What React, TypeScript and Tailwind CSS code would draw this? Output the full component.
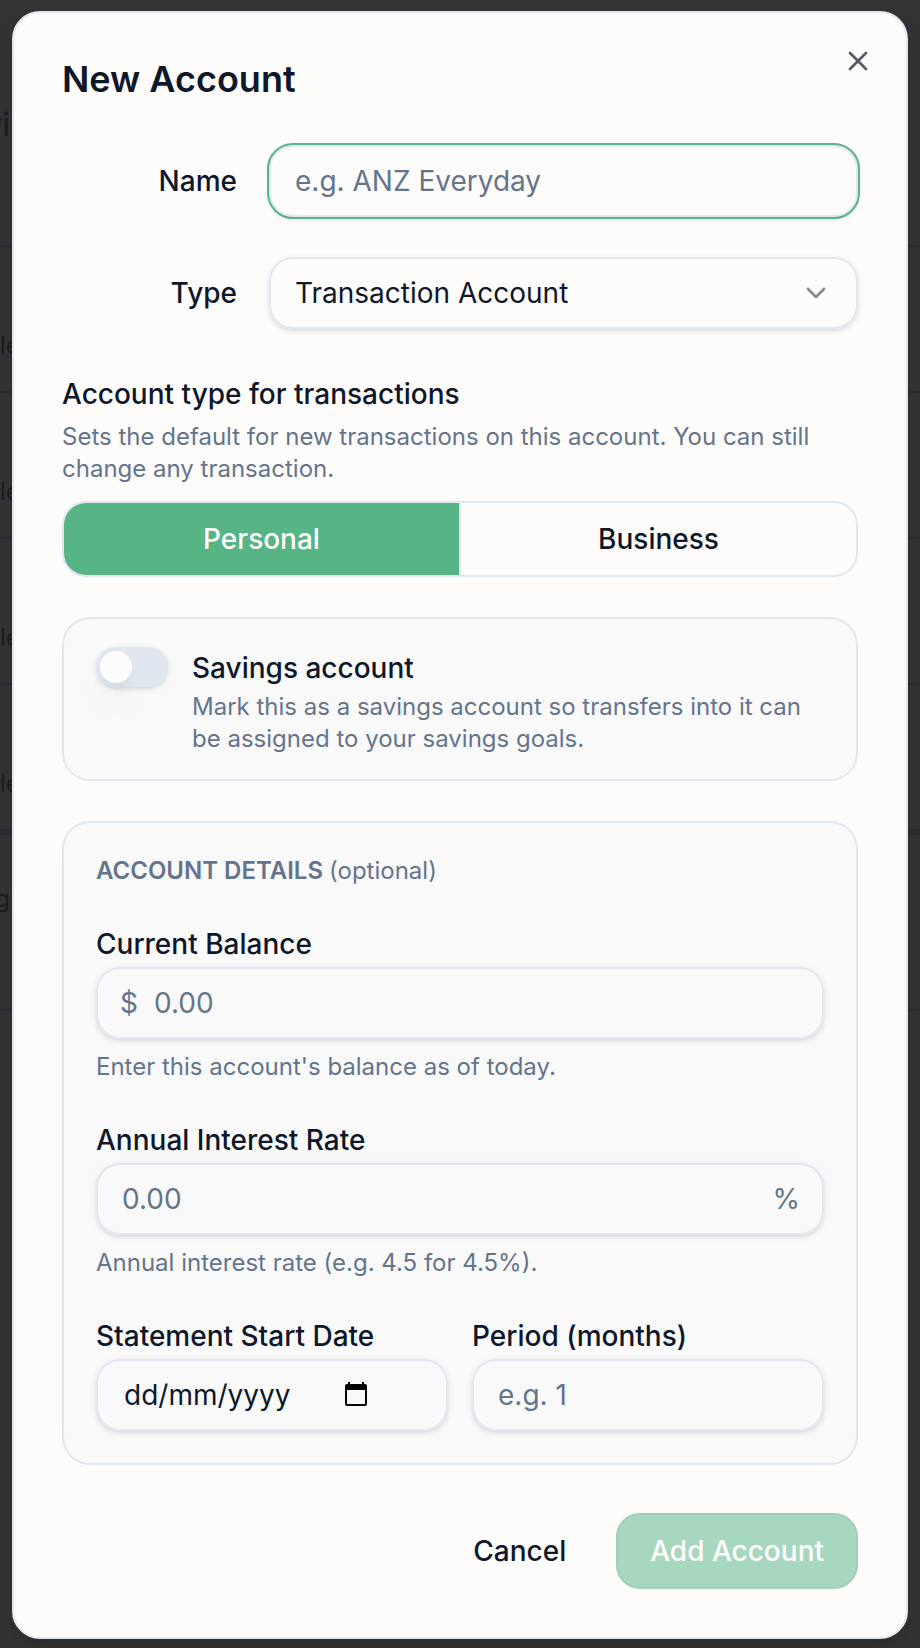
import { useState } from 'react';
import { ChevronDown, X } from 'lucide-react';

const fieldClass =
  'w-full h-18 rounded-3xl border-2 border-[#e1e7f1] bg-transparent px-6 text-[28px] text-[#0f172a] placeholder:text-[#64748b] shadow-[0_2px_6px_rgba(0,0,0,0.1),0_2px_4px_-2px_rgba(0,0,0,0.1)] focus:outline-none';

const labelClass = 'text-[28px] font-medium text-[#0f172a]';
const stackedLabelClass = 'block pt-0.5 text-[28px] leading-[46px] font-medium text-[#0f172a]';
const hintClass = 'text-2xl leading-8 text-[#64748b]';

const CalendarIcon = () => (
  <svg className="w-6 h-[26px]" viewBox="0 0 24 26" aria-hidden="true">
    <path
      fill="#000"
      fillRule="evenodd"
      d="M4 0h2v2h12V0h2v2h1a2 2 0 0 1 2 2v18a2 2 0 0 1-2 2H3a2 2 0 0 1-2-2V4a2 2 0 0 1 2-2h1zM3 8v14h18V8z"
    />
  </svg>
);

// The page that sits under the dimmed overlay
const PageBehind = () => (
  <div aria-hidden="true" className="absolute inset-0 overflow-hidden text-2xl text-[#1b1d22]">
    <div className="h-[247px] border-b-2 border-[#2d2d2d] pt-[105px]">
      <div className="flex w-[10px] justify-end overflow-hidden text-[32px] leading-10">vi</div>
    </div>
    {[0, 1, 2, 3].map((row) => (
      <div key={row} className="h-[146px] border-b-2 border-[#2d2d2d] pt-[83px] leading-8">
        le
      </div>
    ))}
    <div className="h-[180px] border-b-2 border-t-4 border-[#2d2d2d] pt-12">
      <div className="flex w-[10px] justify-end overflow-hidden leading-8">g</div>
    </div>
  </div>
);

const App = () => {
  const [name, setName] = useState('');
  const [type, setType] = useState('transaction');
  const [usage, setUsage] = useState<'personal' | 'business'>('personal');
  const [isSavings, setIsSavings] = useState(false);
  const [balance, setBalance] = useState('');
  const [rate, setRate] = useState('');
  const [startDate, setStartDate] = useState('');
  const [period, setPeriod] = useState('');

  const usageClass = (value: 'personal' | 'business') =>
    usage === value ? 'bg-[#56b485] text-white' : 'text-[#0f172a]';

  return (
    <div className="relative min-h-screen bg-[#333333] px-3 pt-[11px] pb-[9px] font-['Inter',sans-serif]">
      <PageBehind />

      <div
        role="dialog"
        aria-labelledby="dialogTitle"
        className="relative rounded-[28px] border-2 border-[#e1e7f1] bg-[#fdfcfa] p-12 shadow-[0_20px_30px_-6px_rgba(0,0,0,0.1),0_8px_12px_-8px_rgba(0,0,0,0.1)]"
      >
        <button type="button" aria-label="Close" className="absolute top-8 right-8 text-[#0f172a] opacity-70">
          <X className="w-8 h-8" />
        </button>

        <h2 id="dialogTitle" className="text-4xl leading-9 font-semibold text-[#0f172a]">
          New Account
        </h2>

        <form className="mt-12" onSubmit={(e) => e.preventDefault()}>
          <div className="space-y-10">
            <div className="grid grid-cols-4 items-center gap-8">
              <label htmlFor="name" className={`${labelClass} text-right`}>
                Name
              </label>
              <div className="col-span-3">
                <input
                  id="name"
                  type="text"
                  value={name}
                  onChange={(e) => setName(e.target.value)}
                  placeholder="e.g. ANZ Everyday"
                  className={`${fieldClass} block outline-2 outline-[#56b485] focus:outline-2`}
                />
              </div>
            </div>

            <div className="grid grid-cols-4 items-center gap-8">
              <label htmlFor="type" className={`${labelClass} text-right`}>
                Type
              </label>
              <div className="relative col-span-3">
                <select
                  id="type"
                  value={type}
                  onChange={(e) => setType(e.target.value)}
                  className={`${fieldClass} block appearance-none`}
                >
                  <option value="transaction">Transaction Account</option>
                </select>
                <ChevronDown className="pointer-events-none absolute top-5 right-[26px] w-8 h-8 text-[#0f172a] opacity-50" />
              </div>
            </div>

            <div>
              <span id="usageLabel" className={stackedLabelClass}>
                Account type for transactions
              </span>
              <p className={`${hintClass} mt-1`}>
                Sets the default for new transactions on this account. You can still change any transaction.
              </p>
              <div
                role="group"
                aria-labelledby="usageLabel"
                className="mt-4 flex h-19 overflow-hidden rounded-3xl border-2 border-[#e1e7f1] text-[28px] font-medium"
              >
                <button
                  type="button"
                  aria-pressed={usage === 'personal'}
                  onClick={() => setUsage('personal')}
                  className={`flex-1 ${usageClass('personal')}`}
                >
                  Personal
                </button>
                <button
                  type="button"
                  aria-pressed={usage === 'business'}
                  onClick={() => setUsage('business')}
                  className={`flex-1 border-l-2 border-[#e1e7f1] ${usageClass('business')}`}
                >
                  Business
                </button>
              </div>
            </div>

            <div className="flex gap-6 rounded-[28px] border-2 border-[#e1e7f1] bg-[#f9f9f9] px-8 py-6">
              <button
                id="savings"
                type="button"
                role="switch"
                aria-checked={isSavings}
                aria-labelledby="savingsLabel"
                onClick={() => setIsSavings(!isSavings)}
                className={`mt-1 flex h-10 w-18 shrink-0 items-center rounded-full p-1 shadow-[0_2px_6px_rgba(0,0,0,0.1),0_2px_4px_-2px_rgba(0,0,0,0.1)] ${
                  isSavings ? 'justify-end bg-[#56b485]' : 'bg-[#e1e7f1]'
                }`}
              >
                <span className="h-8 w-8 rounded-full bg-[#fdfcfa] shadow-[0_20px_30px_-6px_rgba(0,0,0,0.1),0_8px_12px_-8px_rgba(0,0,0,0.1)]" />
              </button>
              <div>
                <label id="savingsLabel" htmlFor="savings" className={stackedLabelClass}>
                  Savings account
                </label>
                <p className={hintClass}>
                  Mark this as a savings account so transfers into it can be assigned to your savings goals.
                </p>
              </div>
            </div>

            <div className="space-y-8 rounded-[28px] border-2 border-[#e1e7f1] bg-[#f9f9f9] p-8">
              <h3 className="text-2xl leading-8 font-semibold text-[#64748b]">
                ACCOUNT DETAILS <span className="font-normal">(optional)</span>
              </h3>

              <div>
                <label htmlFor="balance" className={stackedLabelClass}>
                  Current Balance
                </label>
                <div className="relative">
                  <span className="absolute inset-y-0 left-6 flex items-center text-[28px] text-[#64748b]">$</span>
                  <input
                    id="balance"
                    type="text"
                    inputMode="decimal"
                    value={balance}
                    onChange={(e) => setBalance(e.target.value)}
                    placeholder="0.00"
                    className={`${fieldClass} block pl-14`}
                  />
                </div>
                <p className={`${hintClass} mt-3`}>Enter this account's balance as of today.</p>
              </div>

              <div>
                <label htmlFor="rate" className={stackedLabelClass}>
                  Annual Interest Rate
                </label>
                <div className="relative">
                  <input
                    id="rate"
                    type="text"
                    inputMode="decimal"
                    value={rate}
                    onChange={(e) => setRate(e.target.value)}
                    placeholder="0.00"
                    className={`${fieldClass} block pr-16`}
                  />
                  <span className="absolute inset-y-0 right-6 flex items-center text-[28px] text-[#64748b]">%</span>
                </div>
                <p className={`${hintClass} mt-3`}>Annual interest rate (e.g. 4.5 for 4.5%).</p>
              </div>

              <div className="grid grid-cols-2 gap-6">
                <div>
                  <label htmlFor="startDate" className={stackedLabelClass}>
                    Statement Start Date
                  </label>
                  <div className={`${fieldClass} flex items-center`}>
                    <input
                      id="startDate"
                      type="text"
                      value={startDate}
                      onChange={(e) => setStartDate(e.target.value)}
                      placeholder="dd/mm/yyyy"
                      className="w-[222px] bg-transparent pl-0.5 placeholder:text-[#0f172a] focus:outline-none"
                    />
                    <button type="button" aria-label="Pick a date">
                      <CalendarIcon />
                    </button>
                  </div>
                </div>
                <div>
                  <label htmlFor="period" className={stackedLabelClass}>
                    Period (months)
                  </label>
                  <input
                    id="period"
                    type="text"
                    inputMode="numeric"
                    value={period}
                    onChange={(e) => setPeriod(e.target.value)}
                    placeholder="e.g. 1"
                    className={`${fieldClass} block`}
                  />
                </div>
              </div>
            </div>
          </div>

          <div className="mt-12 flex justify-end gap-4 text-[28px] font-medium">
            <button type="button" className="h-19 rounded-3xl border-2 border-transparent px-8 text-[#0f172a]">
              Cancel
            </button>
            <button
              type="submit"
              disabled={!name.trim()}
              className="h-19 rounded-3xl border-2 border-[#48a273] bg-[#56b485] px-8 text-white disabled:opacity-50"
            >
              Add Account
            </button>
          </div>
        </form>
      </div>
    </div>
  );
};

export default App;
